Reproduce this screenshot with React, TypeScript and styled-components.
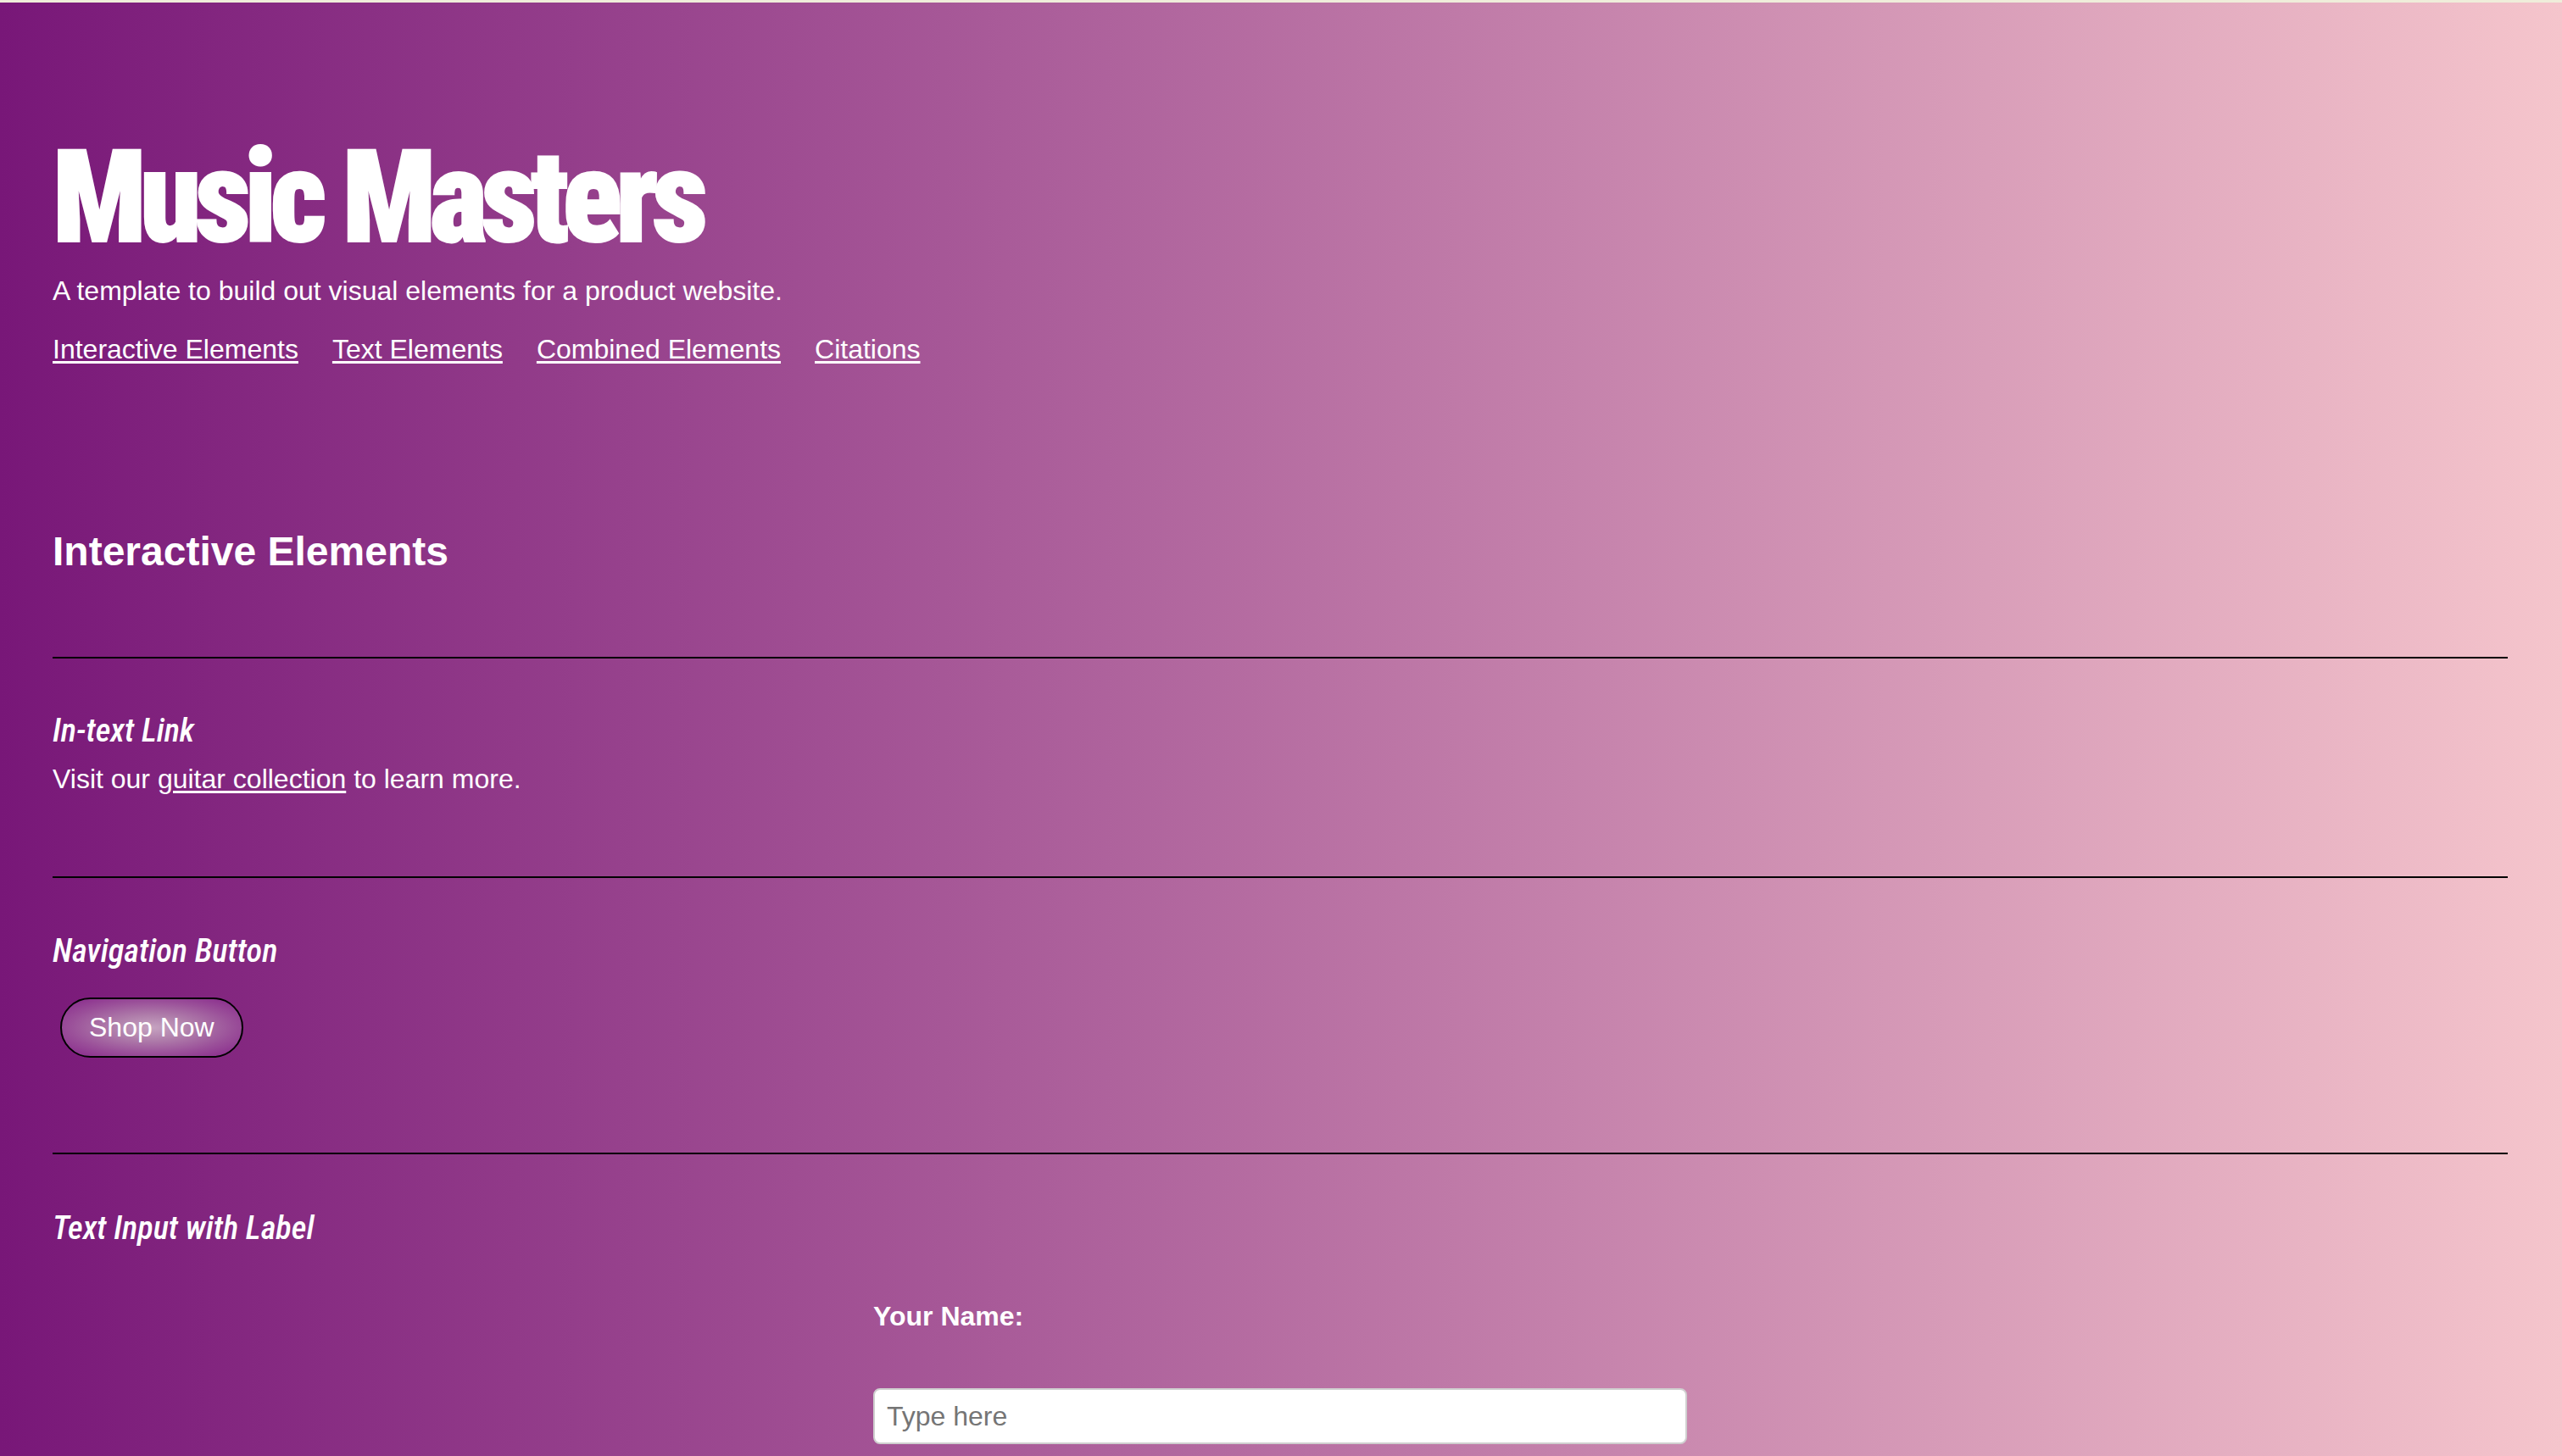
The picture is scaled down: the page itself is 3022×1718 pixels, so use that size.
import React from "react";
import styled, { createGlobalStyle } from "styled-components";

const GlobalStyle = createGlobalStyle`
  html, body {
    margin: 0;
    padding: 0;
  }
  body {
    font-family: "Liberation Sans", Arial, sans-serif;
    color: #ffffff;
  }
`;

const Page = styled.div`
  min-height: 100vh;
  background: linear-gradient(to right, #781778 0%, #f5c5cc 100%);
  display: flex;
  flex-direction: column;
`;

const TopStrip = styled.div`
  height: 3px;
  background: #efedda;
`;

const Content = styled.main`
  padding: 154px 64px 80px 62px;
  display: flex;
  flex-direction: column;
`;

const Header = styled.header`
  display: flex;
  flex-direction: column;
`;

const Title = styled.h1`
  margin: 0;
  font-family: "Roboto Condensed", "Liberation Sans", sans-serif;
  font-weight: 900;
  font-size: 152px;
  line-height: 152px;
  letter-spacing: -8px;
  -webkit-text-stroke: 2px #ffffff;
  color: #ffffff;
  transform: scaleX(0.96);
  transform-origin: left center;
`;

const Tagline = styled.p`
  margin: 14px 0 0;
  font-size: 32px;
  line-height: 40px;
`;

const Nav = styled.nav`
  margin-top: 29px;
  display: flex;
  gap: 40px;
`;

const NavLink = styled.a`
  font-size: 32px;
  line-height: 40px;
  color: #ffffff;
  text-decoration: underline;
  text-underline-offset: 3px;
`;

const SectionTitle = styled.h2`
  margin: 191px 0 0;
  font-size: 48px;
  line-height: 56px;
  font-weight: 700;
`;

const Divider = styled.hr<{ $gap: number }>`
  margin: ${(p) => p.$gap}px 0 0;
  border: none;
  height: 2px;
  background: #000000;
`;

const Block = styled.section<{ $top: number }>`
  margin-top: ${(p) => p.$top}px;
  display: flex;
  flex-direction: column;
`;

const BlockTitle = styled.h3`
  margin: 0;
  font-family: "Roboto Condensed", Roboto, sans-serif;
  font-style: italic;
  font-weight: 500;
  font-size: 38.4px;
  line-height: 44px;
`;

const Paragraph = styled.p`
  margin: 15px 0 0;
  font-size: 32px;
  line-height: 40px;
`;

const InlineLink = styled.a`
  color: #ffffff;
  text-decoration: underline;
  text-underline-offset: 3px;
`;

const ShopButton = styled.button`
  margin: 33px 0 0 9px;
  align-self: flex-start;
  height: 71px;
  padding: 0 32px 2px;
  border: 2px solid #000000;
  border-radius: 36px;
  background: radial-gradient(ellipse at center, #c6a3c1 0%, #b07fab 30%, #9a4f99 65%, #86248a 100%);
  color: #ffffff;
  font-family: "Liberation Sans", Arial, sans-serif;
  font-size: 32px;
  line-height: 40px;
  display: flex;
  align-items: center;
  cursor: pointer;
`;

const Form = styled.form`
  margin-top: 62px;
  align-self: center;
  width: 960px;
  display: flex;
  flex-direction: column;
  gap: 65px;
`;

const Label = styled.label`
  font-size: 32px;
  line-height: 40px;
  font-weight: 700;
`;

const TextInput = styled.input`
  box-sizing: border-box;
  width: 960px;
  height: 66px;
  padding: 0 14px;
  border: 2px solid #cfcfcf;
  border-radius: 8px;
  background: #ffffff;
  font-family: "Liberation Sans", Arial, sans-serif;
  font-size: 32px;
  color: #222;
  &::placeholder {
    color: #757575;
  }
`;

export default function App() {
  return (
    <Page>
      <GlobalStyle />
      <TopStrip />
      <Content>
        <Header>
          <Title>Music Masters</Title>
          <Tagline>A template to build out visual elements for a product website.</Tagline>
          <Nav>
            <NavLink href="#interactive">Interactive Elements</NavLink>
            <NavLink href="#text">Text Elements</NavLink>
            <NavLink href="#combined">Combined Elements</NavLink>
            <NavLink href="#citations">Citations</NavLink>
          </Nav>
        </Header>

        <SectionTitle id="interactive">Interactive Elements</SectionTitle>
        <Divider $gap={96} />

        <Block $top={63}>
          <BlockTitle>In-text Link</BlockTitle>
          <Paragraph>
            Visit our <InlineLink href="#guitars">guitar collection</InlineLink> to learn more.
          </Paragraph>
        </Block>
        <Divider $gap={95} />

        <Block $top={64}>
          <BlockTitle>Navigation Button</BlockTitle>
          <ShopButton type="button">Shop Now</ShopButton>
        </Block>
        <Divider $gap={112} />

        <Block $top={65}>
          <BlockTitle>Text Input with Label</BlockTitle>
          <Form onSubmit={(e) => e.preventDefault()}>
            <Label htmlFor="name">Your Name:</Label>
            <TextInput id="name" type="text" placeholder="Type here" />
          </Form>
        </Block>
      </Content>
    </Page>
  );
}
